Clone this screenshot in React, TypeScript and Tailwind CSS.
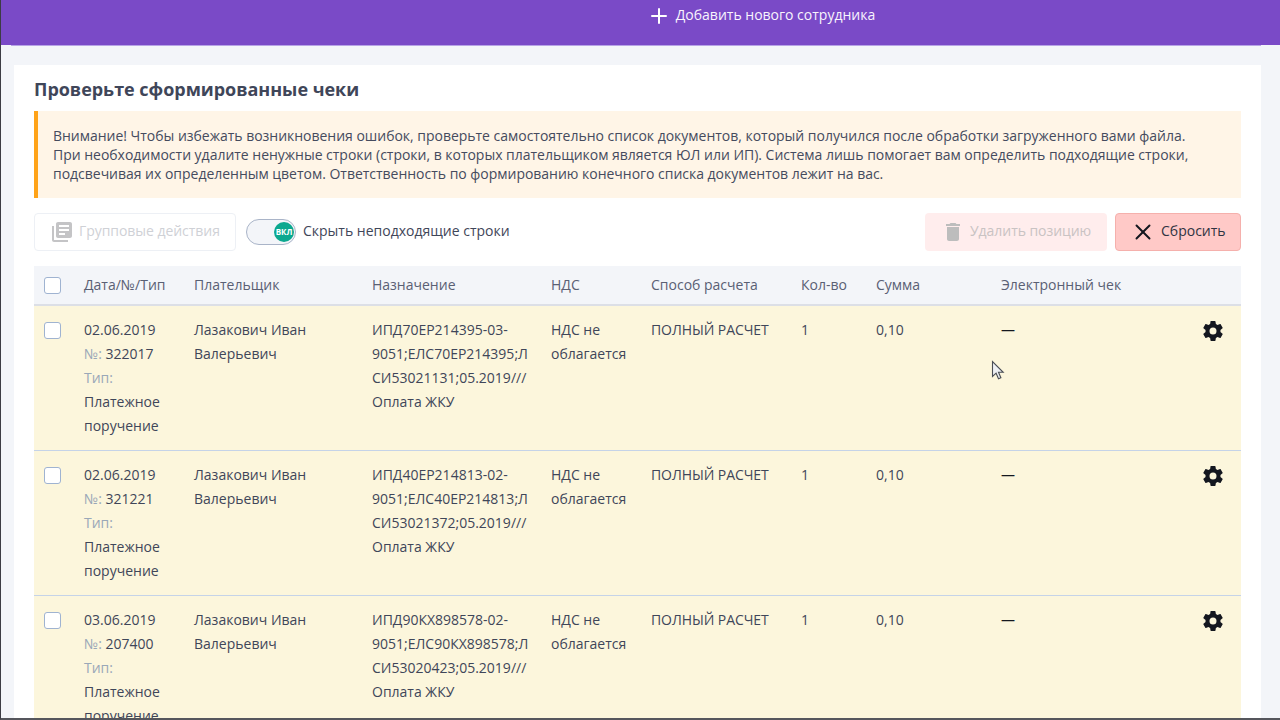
import { Plus, X } from "lucide-react";

const rows = [
  {
    date: "02.06.2019",
    num: "322017",
    purpose: ["ИПД70ЕР214395-03-", "9051;ЕЛС70ЕР214395;Л", "СИ53021131;05.2019///", "Оплата ЖКУ"],
  },
  {
    date: "02.06.2019",
    num: "321221",
    purpose: ["ИПД40ЕР214813-02-", "9051;ЕЛС40ЕР214813;Л", "СИ53021372;05.2019///", "Оплата ЖКУ"],
  },
  {
    date: "03.06.2019",
    num: "207400",
    purpose: ["ИПД90КХ898578-02-", "9051;ЕЛС90КХ898578;Л", "СИ53020423;05.2019///", "Оплата ЖКУ"],
  },
];

const headers = ["Дата/№/Тип", "Плательщик", "Назначение", "НДС", "Способ расчета", "Кол-во", "Сумма", "Электронный чек"];

const cols = "grid grid-cols-[50px_110px_178px_179px_100px_150px_75px_125px_1fr]";

function Checkbox() {
  return <div className="ml-[10px] h-[17px] w-[17px] rounded-[3px] border border-[#9fb3d1] bg-white" />;
}

function Gear() {
  return (
    <svg viewBox="0 0 24 24" className="mt-[1px] h-[24px] w-[24px] fill-[#14171f]">
      <path d="M19.43 12.98c.04-.32.07-.64.07-.98s-.03-.66-.07-.98l2.11-1.65c.19-.15.24-.42.12-.64l-2-3.46c-.12-.22-.39-.3-.61-.22l-2.49 1c-.52-.4-1.08-.73-1.69-.98l-.38-2.65A.49.49 0 0 0 14 2h-4c-.25 0-.46.18-.49.42l-.38 2.65c-.61.25-1.17.59-1.69.98l-2.49-1c-.23-.09-.49 0-.61.22l-2 3.46c-.13.22-.07.49.12.64l2.11 1.65c-.04.32-.07.65-.07.98s.03.66.07.98l-2.11 1.65c-.19.15-.24.42-.12.64l2 3.46c.12.22.39.3.61.22l2.49-1c.52.4 1.08.73 1.69.98l.38 2.65c.03.24.24.42.49.42h4c.25 0 .46-.18.49-.42l.38-2.65c.61-.25 1.17-.59 1.69-.98l2.49 1c.23.09.49 0 .61-.22l2-3.46c.12-.22.07-.49-.12-.64l-2.11-1.65zM12 15.5a3.5 3.5 0 1 1 0-7 3.5 3.5 0 0 1 0 7z" />
    </svg>
  );
}

export default function App() {
  return (
    <div className="relative h-[720px] overflow-hidden border-b-2 border-l border-b-[#55565c] border-l-[#3c3c44] bg-[#f3f5f9] font-['Open_Sans',sans-serif] text-[14px] text-[#3c4257]">
      <div className="flex h-[45px] items-start justify-center bg-[#7a4ac7] pl-[241px] pt-[3px] text-white">
        <div className="flex h-[24px] items-center gap-[5px]">
          <Plus size={24} strokeWidth={2} className="mt-[2px]" />
          <span className="pb-[2px] text-[14px] text-[#f8f4fd]">Добавить нового сотрудника</span>
        </div>
      </div>
      <div className="ml-[10px] mr-[19px] h-px bg-[#b7a3e6]" />

      <div className="ml-[13px] mr-[19px] mt-[19px] bg-white px-[20px] pt-[12px]">
        <h2 className="text-[18px] font-bold leading-[25px] tracking-[-0.03px] text-[#3f4659]">Проверьте сформированные чеки</h2>

        <div className="mt-[9px] h-[87px] border-l-[4px] border-l-[#ffa319] bg-[#fff5e7] pl-[15px] pt-[15px] text-[14px] leading-[19px] tracking-[-0.02px] text-[#454b5e]">
          <p>Внимание! Чтобы избежать возникновения ошибок, проверьте самостоятельно список документов, который получился после обработки загруженного вами файла.</p>
          <p>При необходимости удалите ненужные строки (строки, в которых плательщиком является ЮЛ или ИП). Система лишь помогает вам определить подходящие строки,</p>
          <p>подсвечивая их определенным цветом. Ответственность по формированию конечного списка документов лежит на вас.</p>
        </div>

        <div className="mt-[15px] flex h-[38px] items-center">
          <div className="flex h-[38px] w-[202px] items-center rounded-[4px] border border-[#edf0f5] pl-[15px] text-[#cfd1d6]">
            <svg viewBox="0 0 24 24" className="h-[24px] w-[24px] fill-[#c4c4c6]">
              <path d="M4 6H2v14c0 1.1.9 2 2 2h14v-2H4V6zm16-4H8c-1.1 0-2 .9-2 2v12c0 1.1.9 2 2 2h12c1.1 0 2-.9 2-2V4c0-1.1-.9-2-2-2zm-1 9H9V9h10v2zm-4 4H9v-2h6v2zm4-8H9V5h10v2z" />
            </svg>
            <span className="ml-[5px] pb-[3px] tracking-[-0.05px]">Групповые действия</span>
          </div>
          <div className="relative ml-[10px] h-[26px] w-[50px] rounded-full border border-[#a9b4c8] bg-[#f3f5f9]">
            <div className="absolute right-[1px] top-[2px] flex h-[20px] w-[20px] items-center justify-center rounded-full bg-[#0ba88f] text-[8px] font-bold text-white">
              ВКЛ
            </div>
          </div>
          <span className="ml-[7px] pb-[3px] text-[#3f4659]">Скрыть неподходящие строки</span>

          <div className="ml-auto flex h-[38px] w-[182px] items-center rounded-[4px] bg-[#ffeded] pl-[16px] text-[#c9c3c3]">
            <svg viewBox="0 0 24 24" className="h-[24px] w-[24px] fill-[#bdbdbd]">
              <path d="M6 19c0 1.1.9 2 2 2h8c1.1 0 2-.9 2-2V7H6v12zM19 4h-3.5l-1-1h-5l-1 1H5v2h14V4z" />
            </svg>
            <span className="ml-[5px] pb-[3px] tracking-[-0.05px]">Удалить позицию</span>
          </div>
          <div className="ml-[8px] flex h-[38px] w-[126px] items-center rounded-[4px] border border-[#f5b0ac] bg-[#ffc9c7] pl-[14px] text-[#2f3442]">
            <X size={26} strokeWidth={1.8} className="text-[#14171f]" />
            <span className="ml-[5px] pb-[3px]">Сбросить</span>
          </div>
        </div>

        <div className={`${cols} mt-[15px] h-[40px] items-center border-b-2 border-b-[#dcdfe6] bg-[#f3f5f9] text-[#5a6074]`}>
          <Checkbox />
          {headers.map((h) => (
            <div key={h} className="pb-[2px]">
              {h}
            </div>
          ))}
        </div>

        {rows.map((row) => (
          <div key={row.num} className={`${cols} h-[145px] border-b border-b-[#c5d3e8] bg-[#fcf6dc] pt-[12px] leading-[24px] text-[#3f4659]`}>
            <div className="pt-[4px]">
              <Checkbox />
            </div>
            <div>
              <div>{row.date}</div>
              <div>
                <span className="text-[#9aa8b8]">№:</span> {row.num}
              </div>
              <div className="text-[#9aa8b8]">Тип:</div>
              <div>Платежное</div>
              <div>поручение</div>
            </div>
            <div>
              <div>Лазакович Иван</div>
              <div>Валерьевич</div>
            </div>
            <div>
              {row.purpose.map((line) => (
                <div key={line}>{line}</div>
              ))}
            </div>
            <div>
              <div>НДС не</div>
              <div>облагается</div>
            </div>
            <div className="tracking-[-0.08px]">ПОЛНЫЙ РАСЧЕТ</div>
            <div>1</div>
            <div>0,10</div>
            <div className="flex justify-between pr-[16px]">
              <span className="text-[#14171f]">—</span>
              <Gear />
            </div>
          </div>
        ))}
      </div>

      {/* mouse pointer in the shot */}
      <svg viewBox="0 0 14 22" className="absolute left-[990px] top-[360px] h-[22px] w-[14px]">
        <path d="M1.5 1.5v15l3.6-3.3 2.4 5.6 2.4-1-2.4-5.5h4.7z" fill="#eef0f3" stroke="#4a4e55" strokeWidth="1.1" />
      </svg>
    </div>
  );
}
